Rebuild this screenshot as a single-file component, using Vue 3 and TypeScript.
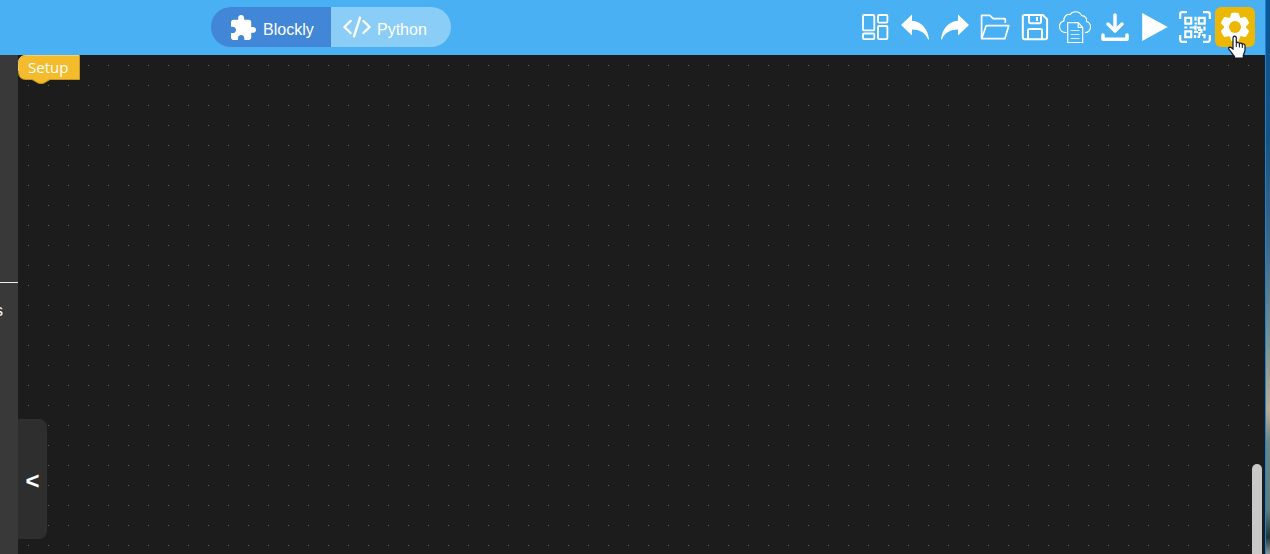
<script setup lang="ts">
import { ref } from 'vue'

type Mode = 'blockly' | 'python'
const mode = ref<Mode>('blockly')
</script>

<template>
  <div class="screen">
    <div class="app">
      <header class="topbar">
        <div class="modes">
          <button class="mode" :class="{ active: mode === 'blockly' }" type="button" @click="mode = 'blockly'">
            <svg width="25" height="25" viewBox="2 1 21 21" fill="currentColor" aria-hidden="true">
              <path d="M20.5 11H19V7c0-1.1-.9-2-2-2h-4V3.5C13 2.12 11.88 1 10.5 1S8 2.12 8 3.5V5H4c-1.1 0-1.99.9-1.99 2v3.8H3.5c1.49 0 2.7 1.21 2.7 2.7s-1.21 2.7-2.7 2.7H2V20c0 1.1.9 2 2 2h3.8v-1.5c0-1.49 1.21-2.7 2.7-2.7 1.49 0 2.7 1.21 2.7 2.7V22H17c1.1 0 2-.9 2-2v-4h1.5c1.38 0 2.5-1.12 2.5-2.5S21.88 11 20.5 11z" />
            </svg>
            <span>Blockly</span>
          </button>
          <button class="mode python" :class="{ active: mode === 'python' }" type="button" @click="mode = 'python'">
            <svg width="28" height="22" viewBox="0 0 28 22" fill="none" stroke="currentColor" stroke-width="2.4" stroke-linecap="round" stroke-linejoin="round" aria-hidden="true">
              <path d="M7.6 5 1.4 11l6.2 6M20.4 5l6.2 6-6.2 6M17 1.6 11 20.4" />
            </svg>
            <span>Python</span>
          </button>
        </div>

        <nav class="tools" aria-label="Project tools">
          <button class="tool" type="button" aria-label="Layout">
            <svg viewBox="0 0 40 40" fill="none" stroke="currentColor" stroke-width="1.8">
              <rect x="8" y="8" width="11.3" height="15.4" rx="1" />
              <rect x="23" y="8" width="9.4" height="7.6" rx="1" />
              <rect x="8" y="26.5" width="11.3" height="5.6" rx="1" />
              <rect x="23" y="19" width="9.4" height="13.1" rx="1" />
            </svg>
          </button>
          <button class="tool" type="button" aria-label="Undo">
            <svg viewBox="0 0 40 40" fill="currentColor">
              <path d="M6 18 17 7.6v6.2c9 .6 16 8 17 18.4-.2.4-.7.3-.9 0-3.3-6.8-8.8-9.6-16.1-9.6v6z" />
            </svg>
          </button>
          <button class="tool" type="button" aria-label="Redo">
            <svg viewBox="0 0 40 40" fill="currentColor">
              <path d="M34 18 23 7.6v6.2c-9 .6-16 8-17 18.4.2.4.7.3.9 0 3.3-6.8 8.8-9.6 16.1-9.6v6z" />
            </svg>
          </button>
          <button class="tool" type="button" aria-label="Open">
            <svg viewBox="0 0 40 40" fill="none" stroke="currentColor" stroke-width="1.7" stroke-linejoin="round">
              <path d="M30.3 16v-3.6q0-.8-.8-.8H18.2l-3.400-3.3H6.600v23.400h23.200l4-13.100H11.200L6.800 31.500" />
            </svg>
          </button>
          <button class="tool" type="button" aria-label="Save">
            <svg viewBox="0 0 40 40" fill="none" stroke="currentColor" stroke-width="2" stroke-linejoin="round">
              <path d="M9.3 8h18.5l4.300 4.300v18q0 1.900-1.900 1.900H9.700q-1.900 0-1.900-1.900V9.500Q7.800 8 9.300 8z" />
              <path d="M14 8v6.800q0 1.400 1.400 1.400h9.200q1.400 0 1.400-1.400V8M13 32.200v-8.800q0-1.400 1.400-1.400h11.200q1.400 0 1.400 1.400v8.800" />
              <path d="M22 10v4" />
            </svg>
          </button>
          <button class="tool" type="button" aria-label="Cloud files">
            <svg viewBox="0 0 40 40" fill="none" stroke="currentColor" stroke-width="1.2" stroke-linejoin="round">
              <path d="M11.500 25.700c-4-.2-7-2.500-7-6 0-3 1.800-5.100 4.400-5.800C8.600 9.300 12 6.900 15 7.600c2.300-3.500 9-4.500 11.800 1.100 3.500 0 5.200 2.800 4.700 5.800 2.500.7 4 2.700 4 5.500 0 3.300-2.200 5.300-5.500 5.700" />
              <path d="M12.700 15.700h10.500l4.500 4.600v15.200h-15zM23.200 15.700v4.600h4.500" />
              <path d="M15.500 23.500h9M15.500 27.500h9M15.500 31.500h9" opacity=".75" />
            </svg>
          </button>
          <button class="tool" type="button" aria-label="Download">
            <svg viewBox="0 0 40 40" fill="none" stroke="currentColor" stroke-width="3.5" stroke-linecap="round" stroke-linejoin="round">
              <path d="M20 8v15M13 17l7 7 7-7M8 28v4.200h24V28" />
            </svg>
          </button>
          <button class="tool" type="button" aria-label="Run">
            <svg viewBox="0 0 40 40" fill="currentColor"><path d="M7.200 6v28l25.500-14z" /></svg>
          </button>
          <button class="tool" type="button" aria-label="QR code">
            <svg viewBox="0 0 40 40" fill="none" stroke="currentColor" stroke-width="2.200">
              <path d="M5.200 12V7.200q0-2 2-2H12M28 5.200h4.800q2 0 2 2V12M34.800 28v4.800q0 2-2 2H28M12 34.800H7.200q-2 0-2-2V28" />
              <path d="M10.300 10.800h5.900v5.900h-5.900zM23.800 10.800h5.900v5.900h-5.900zM10.300 24.300h5.900v5.900h-5.900z" />
              <path d="M20.500 9.700v4M19.500 16.500h2.500M9.300 20.500h3M14.500 20.500h5M20.500 18.500v5M22 20.500h4M29.500 19.500v4M19 25h4M23 22.800h4M26.500 22v4M24.500 25v4M27 28h3.700M20 28v3M22.500 30h2.500M29.500 28v3.300" />
            </svg>
          </button>
          <button class="tool settings" type="button" aria-label="Settings">
            <svg viewBox="0 0 40 40">
              <g fill="currentColor" stroke="currentColor" stroke-width="3" stroke-linejoin="round">
                <path d="M17.500 7.200h5l1.200 4 2.300 1.300 4-1 2.500 4.300-2.900 3v2.400l2.900 3-2.500 4.300-4-1-2.300 1.300-1.200 4h-5l-1.200-4-2.300-1.300-4 1-2.500-4.300 2.900-3v-2.400l-2.900-3 2.500-4.300 4 1 2.300-1.300z" />
              </g>
              <circle cx="20" cy="20" r="6" fill="#ecb804" />
            </svg>
            <svg class="cursor" width="20" height="25" viewBox="0 0 20 25" aria-hidden="true">
              <path d="M6 14V3.200C6 .4 9.300.4 9.300 3.200V8.500c.4-1.500 2.900-1.300 3.100.3.600-1.100 2.700-.8 2.900.7.700-1 2.700-.6 2.700 1.200V15c0 2.500-1.700 3.700-1.700 6v2H7.500v-1.600C5.700 19.500 4.100 16.700 2.200 14.700.5 12.500 3 11.300 4.700 13z" fill="#fff" stroke="#10152b" stroke-width="1.2" />
              <path d="M9.300 8.500V12M12.400 9v3.500M15.300 9.800V13" stroke="#10152b" />
            </svg>
          </button>
        </nav>
      </header>

      <div class="body">
        <aside class="sidebar">
          <div class="group"></div>
          <div class="category">s</div>
        </aside>
        <main class="workspace">
          <div class="block">
            <svg width="62" height="30" viewBox="0 0 62 30" aria-hidden="true">
              <path d="M8 .5H61.500V24.500H32l-6 3.500q-3 1-6 0l-6-3.500H8q-7.500 0-7.500-8V8.500Q.5.5 8 .5z" fill="#f4bb2d" stroke="#c29524" />
              <path d="M.5 16V8.500Q.5.5 8 .5H61" fill="none" stroke="#f7cf6c" />
            </svg>
            <span>Setup</span>
          </div>
          <button class="collapse" type="button" aria-label="Collapse toolbox">&lt;</button>
          <div class="thumb"></div>
        </main>
      </div>
    </div>
    <div class="desktop"></div>
  </div>
</template>

<style>
body {
  margin: 0;
  overflow: hidden;
}
</style>

<style scoped>
.screen {
  display: flex;
  height: 100vh;
  font-family: "Liberation Sans", Arial, sans-serif;
  color: #fff;
}
.app {
  flex: 1;
  display: flex;
  flex-direction: column;
  min-width: 0;
}
.topbar {
  position: relative;
  z-index: 1;
  display: flex;
  justify-content: space-between;
  align-items: center;
  height: 55px;
  box-sizing: border-box;
  padding: 0 10px 1px 211px;
  background: #48b0f3;
}
button {
  border: 0;
  margin: 0;
  padding: 0;
  color: inherit;
  font: inherit;
}
.modes {
  display: flex;
  border-radius: 20px;
  overflow: hidden;
}
.mode {
  display: flex;
  align-items: center;
  gap: 7px;
  box-sizing: border-box;
  width: 120px;
  height: 40px;
  padding: 5px 0 0 20px;
  background: #8acdf7;
  font-size: 16px;
}
.mode svg {
  margin-bottom: 5px;
}
.mode.python {
  gap: 6px;
  padding-left: 12px;
}
.mode.active {
  background: #4287d7;
}
.tools {
  display: flex;
}
.tool {
  position: relative;
  width: 40px;
  height: 40px;
  background: transparent;
}
.tool > svg {
  display: block;
}
.settings {
  border-radius: 6px;
  background: #ecb804;
}
.settings .cursor {
  position: absolute;
  left: 12px;
  top: 28px;
}
.body {
  flex: 1;
  display: flex;
  min-height: 0;
}
.sidebar {
  width: 18px;
  overflow: hidden;
  background: #393939;
}
.group {
  height: 227px;
  border-bottom: 1px solid #eee;
}
.category {
  margin: 19px 0 0 -5px;
  font-size: 16px;
  line-height: 18px;
}
.workspace {
  position: relative;
  flex: 1;
  background: #1c1c1c conic-gradient(from 90deg at 19px 19px, #626262 90deg, transparent 0) -9px -9px / 20px 20px;
}
.block {
  position: relative;
  width: 62px;
  height: 30px;
}
.block svg {
  display: block;
}
.block span {
  position: absolute;
  left: 10px;
  top: 2px;
  font: 15px/21px "Open Sans", "Noto Sans", sans-serif;
}
.collapse {
  position: absolute;
  left: 0;
  bottom: 15px;
  width: 29px;
  height: 120px;
  padding-top: 3px;
  border-radius: 0 8px 8px 0;
  background: #2e2e2e;
  font-size: 24px;
  font-weight: bold;
}
.thumb {
  position: absolute;
  right: 3px;
  bottom: 0;
  width: 10px;
  height: 90px;
  border-radius: 5px 5px 0 0;
  background: #c8c8c8;
}
.desktop {
  width: 4px;
  border-left: 1px solid #1e82d2;
  background: linear-gradient(#0c5797, #155487 25%, #3e6a8b 45%, #6c8e97 60%, #b5ad97 74%, #67858c 80%, #5c7c82 92%, #20343a 97%, #83979a);
}
</style>
